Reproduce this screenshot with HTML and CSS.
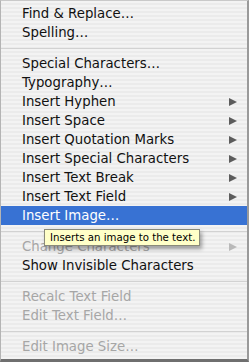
FILE: index.html
```html
<!DOCTYPE html>
<html lang="en">
<head>
  <meta charset="UTF-8" />
  <title>Format Menu</title>
  <link rel="stylesheet" href="styles.css">
</head>
<body>

  <div class="menu">
    <div class="item">Find &amp; Replace…</div>
    <div class="item">Spelling…</div>
    <div class="sep"></div>
    <div class="item">Special Characters…</div>
    <div class="item">Typography…</div>
    <div class="item sub">Insert Hyphen<span class="arrow"></span></div>
    <div class="item sub">Insert Space<span class="arrow"></span></div>
    <div class="item sub">Insert Quotation Marks<span class="arrow"></span></div>
    <div class="item sub">Insert Special Characters<span class="arrow"></span></div>
    <div class="item sub">Insert Text Break<span class="arrow"></span></div>
    <div class="item sub">Insert Text Field<span class="arrow"></span></div>
    <div class="item selected">Insert Image…</div>
    <div class="sep"></div>
    <div class="item sub disabled">Change Characters<span class="arrow"></span></div>
    <div class="item">Show Invisible Characters</div>
    <div class="sep"></div>
    <div class="item disabled">Recalc Text Field</div>
    <div class="item disabled">Edit Text Field…</div>
    <div class="sep"></div>
    <div class="item disabled">Edit Image Size…</div>

    <div class="tooltip">Inserts an image to the text.</div>
  </div>

</body>
</html>
```

FILE: styles.css
```css
* {
  box-sizing: border-box;
  margin: 0;
  padding: 0;
}

body {
  font-family: 'DejaVu Sans', sans-serif;
  background: #ffffff;
}

.menu {
  position: relative;
  width: 249px;
  height: 362px;
  padding-top: 3px;
  border-top: 1px solid #c9c9c9;
  border-left: 1px solid #b4b4b4;
  border-right: 2px solid #9a9a9a;
  border-bottom: 3px solid #6f6f6f;
  background: repeating-linear-gradient(to bottom, #f3f3f3 0, #f3f3f3 2px, #ebebeb 2px, #ebebeb 4px);
}

.item {
  display: flex;
  align-items: center;
  height: 19px;
  padding-left: 21px;
  padding-right: 10px;
  font-size: 13.3px;
  color: #111;
  white-space: nowrap;
}

.item.disabled {
  color: #a6a6a6;
}

.item.selected {
  background: #3872d3;
  color: #ffffff;
}

.arrow {
  margin-left: auto;
  width: 0;
  height: 0;
  border-top: 4.5px solid transparent;
  border-bottom: 4.5px solid transparent;
  border-left: 8px solid #5c5c5c;
}

.item.disabled .arrow {
  border-left-color: #b9b9b9;
}

.sep {
  height: 12px;
  display: flex;
  align-items: center;
}

.sep::before {
  content: "";
  display: block;
  width: 100%;
  height: 1px;
  background: #d2d2d2;
}

.tooltip {
  position: absolute;
  left: 43px;
  top: 228px;
  padding: 2px 4px 2px 5px;
  font-size: 10.2px;
  color: #000;
  background: #ffffc8;
  border: 1px solid #8a8a7a;
  box-shadow: 2px 3px 4px rgba(0, 0, 0, 0.35);
  white-space: nowrap;
}
```
